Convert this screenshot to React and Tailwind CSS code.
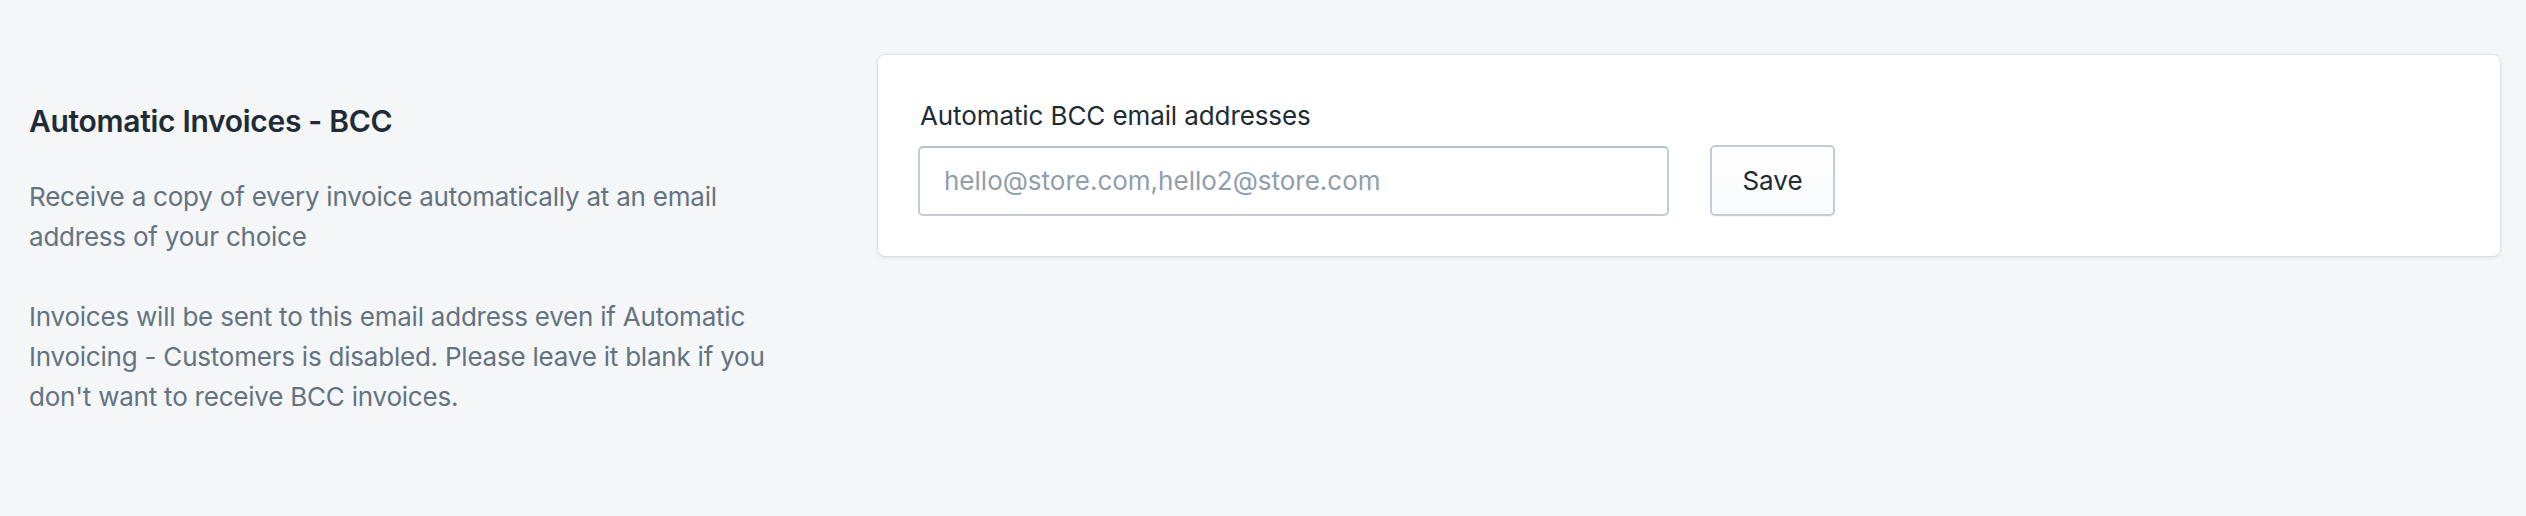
export default function App() {
  return (
    <div className="min-h-[516px] bg-[#f4f6f8] font-['Inter','Noto_Sans',sans-serif] text-[#212b36]">
      <div className="flex items-start gap-[78px] pt-[55px] pl-[29px] pr-[26px]">
        {/* annotation */}
        <div className="w-[771px] shrink-0 pt-[46px]">
          <h2 className="text-[30px] leading-[40px] font-semibold tracking-[-0.3px] text-[#212b36]">
            Automatic Invoices - BCC
          </h2>
          <div className="mt-[36px] text-[26px] leading-[40px] tracking-[-0.22px] text-[#637381]">
            <p>Receive a copy of every invoice automatically at an email address of your choice</p>
            <p className="mt-[40px]">
              Invoices will be sent to this email address even if Automatic Invoicing - Customers is disabled. Please leave it blank if you don't want to receive BCC invoices.
            </p>
          </div>
        </div>

        {/* card */}
        <div className="flex-1 rounded-[7px] bg-white px-[40px] pt-[41px] pb-[40px] shadow-[0_0_0_1px_rgba(63,63,68,0.05),0_1px_4px_0_rgba(63,63,68,0.15)]">
          <label className="block text-[26px] leading-[40px] tracking-[-0.1px] text-[#212b36] mb-[9px] pl-[2px]">
            Automatic BCC email addresses
          </label>
          <div className="flex items-center gap-[41px]">
            <input
              type="text"
              placeholder="hello@store.com,hello2@store.com"
              className="h-[70px] w-[751px] rounded-[5px] border-2 border-[#c4cdd5] border-t-[#b9c1ca] bg-white px-[24px] text-[26px] text-[#212b36] outline-none placeholder:text-[#919eab] shadow-[inset_0_1px_0_0_rgba(99,115,129,0.05)]"
            />
            <button className="h-[71px] w-[125px] rounded-[5px] border-2 border-[#c4cdd5] bg-gradient-to-b from-white to-[#f9fafb] text-[26px] text-[#212b36] shadow-[0_1px_0_0_rgba(22,29,37,0.05)]">
              Save
            </button>
          </div>
        </div>
      </div>
    </div>
  );
}
